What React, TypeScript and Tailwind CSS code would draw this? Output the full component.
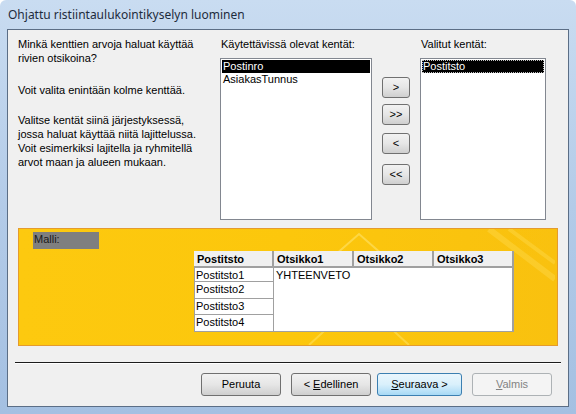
import React from 'react';

const font = { fontFamily: '"Liberation Sans", Arial, sans-serif' };

const SmallButton: React.FC<{ label: string }> = ({ label }) => (
  <button className="w-[28px] h-[21px] rounded-[3px] border border-[#707070] bg-gradient-to-b from-[#f2f2f2] via-[#e6e6e6] to-[#cfcfcf] text-[11px] text-black flex items-center justify-center leading-none">
    {label}
  </button>
);

const WizardButton: React.FC<{ children: React.ReactNode; variant?: 'normal' | 'default' | 'disabled' }> = ({
  children,
  variant = 'normal',
}) => {
  const base = 'w-[80px] h-[23px] rounded-[3px] border text-[11px] flex items-center justify-center whitespace-pre';
  if (variant === 'default')
    return (
      <button className={`${base} w-[85px] border-[#3c7fb1] bg-gradient-to-b from-[#eaf6fd] via-[#d9f0fc] to-[#a7d9f5] text-black`}>
        {children}
      </button>
    );
  if (variant === 'disabled')
    return <button className={`${base} border-[#adb2b5] bg-[#f4f4f4] text-[#838383]`}>{children}</button>;
  return (
    <button className={`${base} border-[#707070] bg-gradient-to-b from-[#f2f2f2] via-[#e6e6e6] to-[#cfcfcf] text-black`}>
      {children}
    </button>
  );
};

const rowCells = ['Postitsto1', 'Postitsto2', 'Postitsto3', 'Postitsto4'];
const rowHeights = ['h-[14px]', 'h-[17px]', 'h-[16px]', 'h-[16px]'];

export default function App() {
  return (
    <div className="w-[576px] h-[414px] bg-gradient-to-b from-[#c9dcf1] via-[#b3cbe8] to-[#a4c0e2] flex flex-col rounded-t-[6px] overflow-hidden" style={font}>
      {/* Title bar */}
      <div className="h-[29px] flex items-center px-[8px] text-[12px] text-[#1e2b3c]" style={{ fontFamily: '"Noto Sans", "Open Sans", sans-serif' }}>
        Ohjattu ristiintaulukointikyselyn luominen
      </div>

      {/* Client area */}
      <div className="mx-[7px] h-[378px] border border-[#5b6e86] bg-[#f0f0f0] flex flex-col text-[11px] text-black">
        <div className="flex pt-[7px] h-[190px]">
          {/* Instructions */}
          <div className="w-[212px] pl-[10px] leading-[14px]">
            <p>Minkä kenttien arvoja haluat käyttää</p>
            <p>rivien otsikoina?</p>
            <p className="mt-[18px]">Voit valita enintään kolme kenttää.</p>
            <p className="mt-[16px]">Valitse kentät siinä järjestyksessä,</p>
            <p>jossa haluat käyttää niitä lajittelussa.</p>
            <p>Voit esimerkiksi lajitella ja ryhmitellä</p>
            <p>arvot maan ja alueen mukaan.</p>
          </div>

          {/* Available fields */}
          <div className="w-[152px] flex flex-col">
            <div className="pl-[1px] leading-[14px]">Käytettävissä olevat kentät:</div>
            <div className="mt-[7px] h-[162px] border border-[#828790] bg-white p-[1px]">
              <div className="bg-black text-white leading-[13px] px-[1px]">Postinro</div>
              <div className="leading-[13px] px-[1px]">AsiakasTunnus</div>
            </div>
          </div>

          {/* Move buttons */}
          <div className="w-[48px] flex flex-col items-center pt-[40px]">
            <SmallButton label=">" />
            <div className="mt-[6px]">
              <SmallButton label=">>" />
            </div>
            <div className="mt-[8px]">
              <SmallButton label="<" />
            </div>
            <div className="mt-[10px]">
              <SmallButton label="<<" />
            </div>
          </div>

          {/* Selected fields */}
          <div className="w-[126px] flex flex-col">
            <div className="pl-[1px] leading-[14px]">Valitut kentät:</div>
            <div className="mt-[7px] h-[162px] border border-[#828790] bg-white p-[1px]">
              <div className="bg-black text-white leading-[13px] px-[1px] outline outline-1 outline-dotted outline-[#c0c0c0] -outline-offset-1">
                Postitsto
              </div>
            </div>
          </div>
        </div>

        {/* Preview */}
        <div className="mx-[10px] mt-[8px] h-[118px] border border-[#e49b2e] bg-gradient-to-r from-[#fdc90f] via-[#fcc70c] to-[#f9c10f] relative overflow-hidden">
          <svg className="absolute inset-0" width="536" height="116" viewBox="0 0 536 116">
            <polyline points="300,40 340,5 380,40" fill="none" stroke="#ffe36a" strokeWidth="2" opacity="0.6" />
            <polyline points="290,116 340,70 390,116" fill="none" stroke="#ffe36a" strokeWidth="2" opacity="0.5" />
            <line x1="470" y1="0" x2="536" y2="50" stroke="#ffdb50" strokeWidth="6" opacity="0.4" />
            <line x1="490" y1="0" x2="536" y2="34" stroke="#ffdb50" strokeWidth="4" opacity="0.4" />
          </svg>
          <div className="relative">
            <div className="ml-[14px] mt-[3px] w-[66px] h-[17px] bg-[#7f7f7f] text-[#1a1a1a] leading-[15px] pl-[1px]">Malli:</div>
            <div className="ml-[175px] mt-[2px] w-[320px] flex flex-col">
              {/* Header */}
              <div className="flex h-[17px] bg-[#f0f0f0] border-b-2 border-[#a0a0a0] font-bold text-[11px]">
                {['Postitsto', 'Otsikko1', 'Otsikko2', 'Otsikko3'].map((h) => (
                  <div key={h} className="w-[80px] pl-[3px] leading-[16px] border-r-2 border-[#a0a0a0]">
                    {h}
                  </div>
                ))}
              </div>
              <div className="flex bg-white border-b border-[#a0a0a0]">
                <div className="w-[80px] flex flex-col border-r border-[#a0a0a0] border-l border-l-[#a0a0a0]">
                  {rowCells.map((c, i) => (
                    <div key={c} className={`${rowHeights[i]} ${i < 3 ? 'border-b border-[#a0a0a0]' : ''} leading-[14px] pl-[1px]`}>
                      {c}
                    </div>
                  ))}
                </div>
                <div className="flex-1 pl-[2px] leading-[14px] border-r-2 border-[#a0a0a0]">YHTEENVETO</div>
              </div>
            </div>
          </div>
        </div>

        {/* Separator */}
        <div className="mx-[7px] mt-[16px] h-[2px] border-t border-[#1c1c1c] border-b border-b-white" />

        {/* Buttons */}
        <div className="flex items-center mt-[9px] pl-[193px] gap-[10px]">
          <WizardButton>Peruuta</WizardButton>
          <WizardButton>
            <span>
              {'< '}
              <span className="underline">E</span>dellinen
            </span>
          </WizardButton>
          <div className="-ml-[4px]">
            <WizardButton variant="default">
              <span>
                <span className="underline">S</span>euraava {'>'}
              </span>
            </WizardButton>
          </div>
          <WizardButton variant="disabled">
            <span>
              <span className="underline">V</span>almis
            </span>
          </WizardButton>
        </div>
      </div>
    </div>
  );
}
